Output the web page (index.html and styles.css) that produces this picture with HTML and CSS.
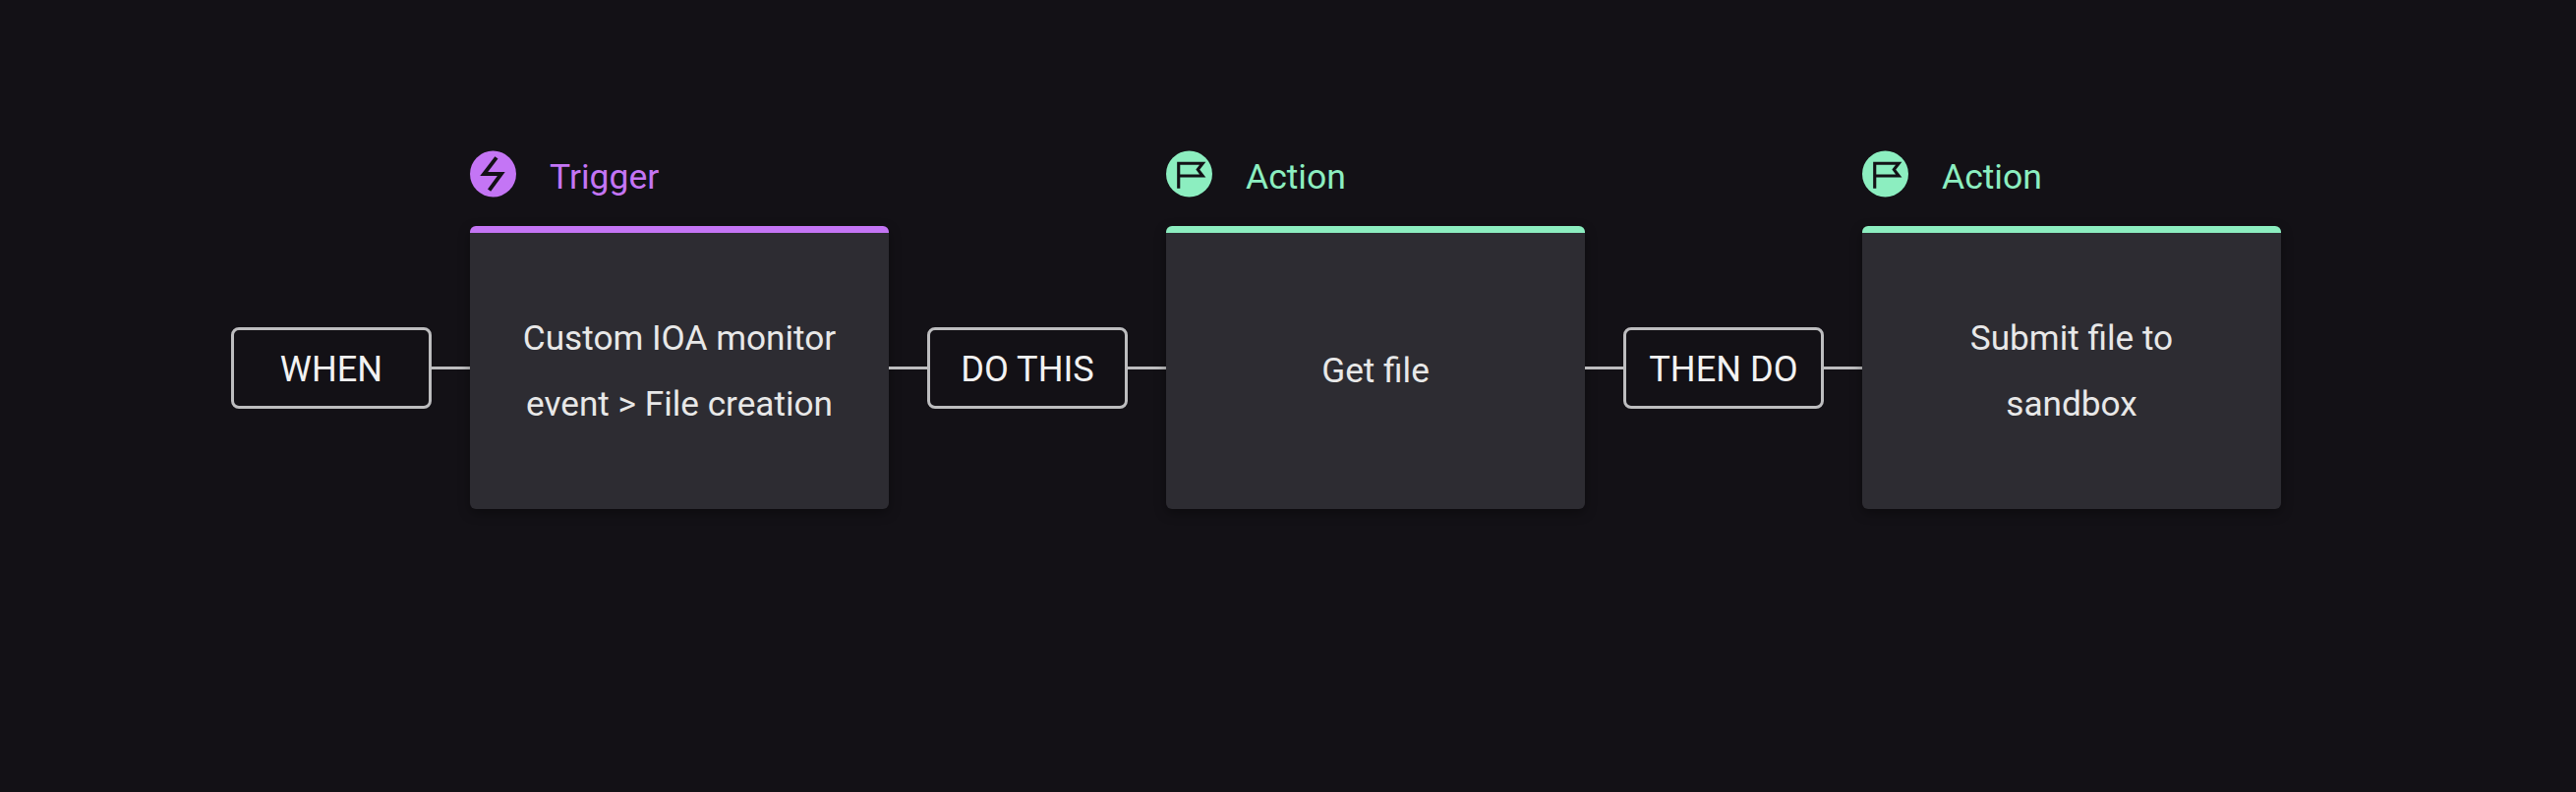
FILE: index.html
```html
<!DOCTYPE html>
<html lang="en">
<head>
<meta charset="utf-8">
<title>Workflow</title>
<link rel="stylesheet" href="styles.css">
</head>
<body>
<main class="flow">
  <div class="link">
    <div class="pill">WHEN</div>
    <div class="line"></div>
  </div>
  <section class="step step-trigger">
    <header class="head">
      <svg class="icon" viewBox="0 0 48 48"><circle cx="24" cy="24" r="24" class="disc"/><path d="M27.5 7 14.5 24H32.5L20 41" class="mark"/></svg>
      <span class="label">Trigger</span>
    </header>
    <div class="card"><p>Custom IOA monitor<br>event &gt; File creation</p></div>
  </section>
  <div class="link">
    <div class="line"></div>
    <div class="pill">DO THIS</div>
    <div class="line"></div>
  </div>
  <section class="step step-action">
    <header class="head">
      <svg class="icon" viewBox="0 0 48 48"><circle cx="24" cy="24" r="24" class="disc"/><path d="M13 39V13H38L33 19.5 38 26H13" class="mark mark-flag"/></svg>
      <span class="label">Action</span>
    </header>
    <div class="card"><p>Get file</p></div>
  </section>
  <div class="link">
    <div class="line"></div>
    <div class="pill">THEN DO</div>
    <div class="line"></div>
  </div>
  <section class="step step-action">
    <header class="head">
      <svg class="icon" viewBox="0 0 48 48"><circle cx="24" cy="24" r="24" class="disc"/><path d="M13 39V13H38L33 19.5 38 26H13" class="mark mark-flag"/></svg>
      <span class="label">Action</span>
    </header>
    <div class="card"><p>Submit file to<br>sandbox</p></div>
  </section>
</main>
</body>
</html>
```
FILE: styles.css
```css
* { box-sizing: border-box; }
html, body { margin: 0; height: 100%; }
body {
  background: #131116;
  font-family: Roboto, "Liberation Sans", sans-serif;
  overflow: hidden;
}
.flow {
  display: flex;
  align-items: flex-end;
  padding: 153px 0 0 235px;
}
.link {
  display: flex;
  align-items: center;
  height: 288px;
}
.line {
  width: 39px;
  height: 3px;
  background: #bdbdbf;
}
.pill {
  width: 204px;
  height: 83px;
  display: flex;
  align-items: center;
  justify-content: center;
  padding-top: 2px;
  border: 3px solid #bdbdbf;
  border-radius: 8px;
  color: #f2f2f2;
  font-size: 36.2px;
}
.step {
  display: flex;
  flex-direction: column;
  width: 426px;
}
.step-trigger { --accent: #c475f5; }
.step-action { --accent: #8ceec0; }
.head {
  display: flex;
  align-items: center;
  gap: 34px;
  height: 48px;
  margin-bottom: 29px;
}
.icon { width: 47px; height: 48px; flex: none; }
.disc { fill: var(--accent); }
.mark { fill: none; stroke: #131116; stroke-width: 4; }
.mark-flag { stroke-width: 3.2; }
.label {
  padding-top: 5px;
  color: var(--accent);
  font-size: 35.5px;
}
.card {
  height: 288px;
  display: flex;
  align-items: center;
  justify-content: center;
  background: #2d2c32;
  border-top: 7px solid var(--accent);
  border-radius: 6px;
  box-shadow: 0 4px 12px rgba(0, 0, 0, 0.35);
}
.card p {
  margin: 0;
  color: #e8e8e8;
  font-size: 35.2px;
  line-height: 67px;
  text-align: center;
}
```
